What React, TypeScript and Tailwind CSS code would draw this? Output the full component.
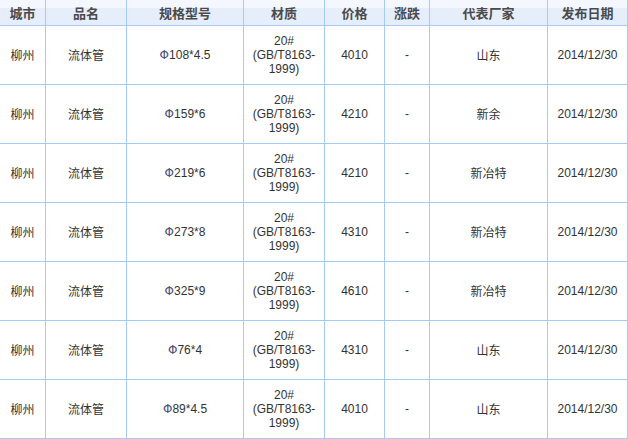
const headers = ["城市", "品名", "规格型号", "材质", "价格", "涨跌", "代表厂家", "发布日期"];

const rows = [
  { spec: "108*4.5", price: "4010", maker: "山东" },
  { spec: "159*6", price: "4210", maker: "新余" },
  { spec: "219*6", price: "4210", maker: "新冶特" },
  { spec: "273*8", price: "4310", maker: "新冶特" },
  { spec: "325*9", price: "4610", maker: "新冶特" },
  { spec: "76*4", price: "4310", maker: "山东" },
  { spec: "89*4.5", price: "4010", maker: "山东" },
];

const cjk = "font-['SimSun','Noto_Sans_CJK_SC',sans-serif] text-[12px] text-[#333]";
const num = "font-['Liberation_Sans','Noto_Sans_CJK_SC',sans-serif] text-[12px] text-[#333]";
const cell = "flex items-center justify-center border-r border-b border-[#a3cbf5] text-center";

export default function App() {
  return (
    <div className="w-[628px] h-[439px] bg-white overflow-hidden">
      <div className="grid grid-cols-[46px_81px_117px_81px_60px_45px_118px_80px]">
        {headers.map((h) => (
          <div
            key={h}
            className={`${cell} h-[26px] bg-[linear-gradient(to_bottom,#f4f7fe_0px,#f4f7fe_8px,#e6eefc_8px,#e6eefc_100%)] font-['Noto_Sans_CJK_SC',sans-serif] text-[13px] font-bold text-[#4a4a4a]`}
          >
            {h}
          </div>
        ))}

        {rows.map((r, i) => (
          <div key={i} className="contents">
            <div className={`${cell} h-[59px] ${cjk}`}>柳州</div>
            <div className={`${cell} h-[59px] ${cjk}`}>流体管</div>
            <div className={`${cell} h-[59px] ${num}`}>
              <span className="font-['DejaVu_Sans',sans-serif] text-[12px] text-[#4b4f7a]">Φ</span>
              {r.spec}
            </div>
            <div className={`${cell} h-[59px] ${num} flex-col leading-[14px]`}>
              <span>20#</span>
              <span>(GB/T8163-</span>
              <span>1999)</span>
            </div>
            <div className={`${cell} h-[59px] ${num}`}>{r.price}</div>
            <div className={`${cell} h-[59px] ${num}`}>-</div>
            <div className={`${cell} h-[59px] ${cjk}`}>{r.maker}</div>
            <div className={`${cell} h-[59px] ${num}`}>2014/12/30</div>
          </div>
        ))}
      </div>
    </div>
  );
}
